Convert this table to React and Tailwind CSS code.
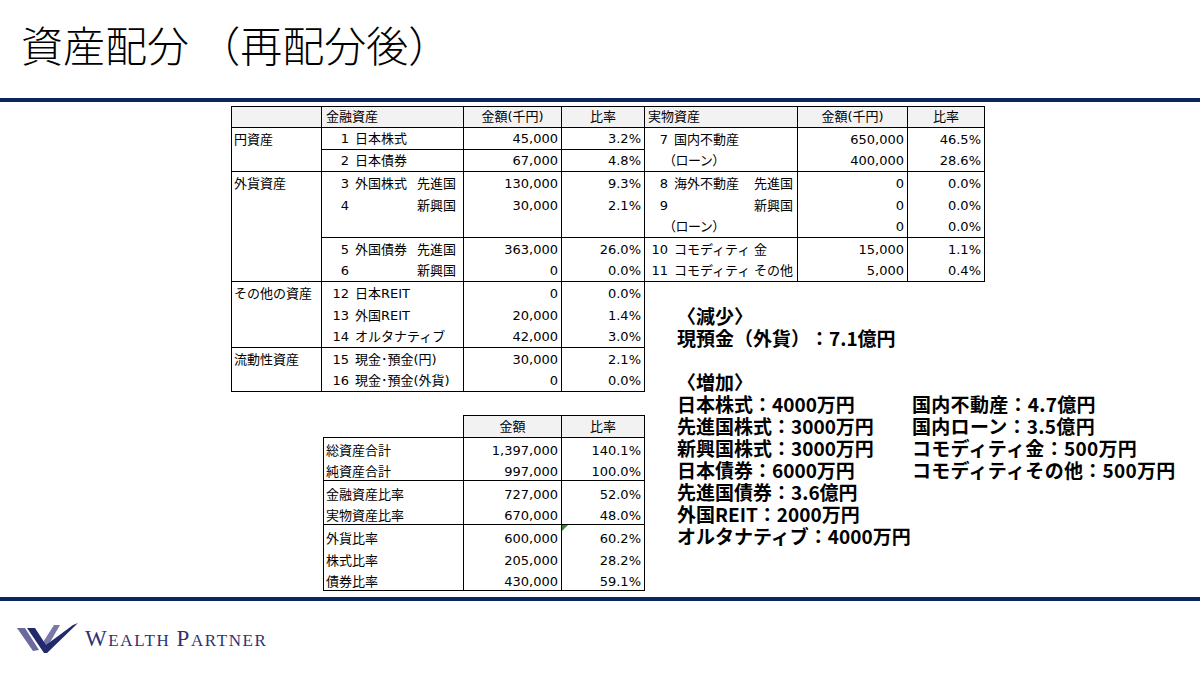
import React from "react";

const T = "font-['DejaVu_Sans','Noto_Sans_CJK_JP',sans-serif]";

const leftRows = [
  { cat: "円資産", num: "1", name: "日本株式", amt: "45,000", pct: "3.2%", b: true },
  { num: "2", name: "日本債券", amt: "67,000", pct: "4.8%", b: true, catB: true },
  { cat: "外貨資産", num: "3", name: "外国株式", sub: "先進国", amt: "130,000", pct: "9.3%" },
  { num: "4", sub: "新興国", amt: "30,000", pct: "2.1%" },
  { b: true },
  { num: "5", name: "外国債券", sub: "先進国", amt: "363,000", pct: "26.0%" },
  { num: "6", sub: "新興国", amt: "0", pct: "0.0%", b: true, catB: true },
  { cat: "その他の資産", num: "12", name: "日本REIT", amt: "0", pct: "0.0%" },
  { num: "13", name: "外国REIT", amt: "20,000", pct: "1.4%" },
  { num: "14", name: "オルタナティブ", amt: "42,000", pct: "3.0%", b: true, catB: true },
  { cat: "流動性資産", num: "15", name: "現金･預金(円)", amt: "30,000", pct: "2.1%" },
  { num: "16", name: "現金･預金(外貨)", amt: "0", pct: "0.0%", b: true, catB: true },
];

const rightRows = [
  { num: "7", name: "国内不動産", amt: "650,000", pct: "46.5%" },
  { name: "（ローン）", paren: true, amt: "400,000", pct: "28.6%", b: true },
  { num: "8", name: "海外不動産", sub: "先進国", amt: "0", pct: "0.0%" },
  { num: "9", sub: "新興国", amt: "0", pct: "0.0%" },
  { name: "（ローン）", paren: true, amt: "0", pct: "0.0%", b: true },
  { num: "10", name: "コモディティ", sub: "金", amt: "15,000", pct: "1.1%" },
  { num: "11", name: "コモディティ", sub: "その他", amt: "5,000", pct: "0.4%", b: true },
];

const summary = [
  { label: "総資産合計", amt: "1,397,000", pct: "140.1%", t: true },
  { label: "純資産合計", amt: "997,000", pct: "100.0%", b: true },
  { label: "金融資産比率", amt: "727,000", pct: "52.0%" },
  { label: "実物資産比率", amt: "670,000", pct: "48.0%", b: true },
  { label: "外貨比率", amt: "600,000", pct: "60.2%", tri: true },
  { label: "株式比率", amt: "205,000", pct: "28.2%" },
  { label: "債券比率", amt: "430,000", pct: "59.1%", b: true },
];

function LeftTable() {
  return (
    <div className={`flex flex-col border-l border-black text-[13px] text-black ${T}`}>
      <div className="flex h-[22px]">
        <div className="w-[90px] shrink-0 border-r border-t border-b border-black bg-[#f2f2f2]" />
        <div className="w-[142px] shrink-0 border-r border-t border-b border-black bg-[#f2f2f2] flex items-center pl-[4px]">金融資産</div>
        <div className="w-[98px] shrink-0 border-r border-t border-b border-black bg-[#f2f2f2] flex items-center justify-center">金額(千円)</div>
        <div className="w-[83px] shrink-0 border-r border-t border-b border-black bg-[#f2f2f2] flex items-center justify-center">比率</div>
      </div>
      {leftRows.map((r, i) => (
        <div key={i} className="flex h-[22px]">
          <div className={`w-[90px] shrink-0 border-r border-black flex items-center pt-[1px] pl-[2px] whitespace-nowrap ${r.catB ? "border-b" : ""}`}>{r.cat}</div>
          <div className={`w-[142px] shrink-0 border-r border-black flex items-center pt-[1px] whitespace-nowrap ${r.b ? "border-b" : ""}`}>
            <span className="w-[27px] shrink-0 text-right">{r.num}</span>
            {r.sub ? (
              <>
                <span className="w-[62px] shrink-0 ml-[6px]">{r.name}</span>
                <span>{r.sub}</span>
              </>
            ) : (
              <span className="ml-[6px]">{r.name}</span>
            )}
          </div>
          <div className={`w-[98px] shrink-0 border-r border-black flex items-center justify-end pt-[1px] pr-[3px] ${r.b ? "border-b" : ""}`}>{r.amt}</div>
          <div className={`w-[83px] shrink-0 border-r border-black flex items-center justify-end pt-[1px] pr-[3px] ${r.b ? "border-b" : ""}`}>{r.pct}</div>
        </div>
      ))}
    </div>
  );
}

function RightTable() {
  return (
    <div className={`flex flex-col text-[13px] text-black ${T}`}>
      <div className="flex h-[22px]">
        <div className="w-[153px] shrink-0 border-r border-t border-b border-black bg-[#f2f2f2] flex items-center pl-[3px]">実物資産</div>
        <div className="w-[110px] shrink-0 border-r border-t border-b border-black bg-[#f2f2f2] flex items-center justify-center">金額(千円)</div>
        <div className="w-[77px] shrink-0 border-r border-t border-b border-black bg-[#f2f2f2] flex items-center justify-center">比率</div>
      </div>
      {rightRows.map((r, i) => (
        <div key={i} className="flex h-[22px]">
          <div className={`w-[153px] shrink-0 border-r border-black flex items-center pt-[1px] whitespace-nowrap ${r.b ? "border-b" : ""}`}>
            <span className="w-[23px] shrink-0 text-right">{r.num}</span>
            {r.sub ? (
              <>
                <span className="w-[80px] shrink-0 ml-[6px]">{r.name}</span>
                <span>{r.sub}</span>
              </>
            ) : (
              <span className={r.paren ? "ml-[-5px] tracking-[-0.5px]" : "ml-[6px]"}>{r.name}</span>
            )}
          </div>
          <div className={`w-[110px] shrink-0 border-r border-black flex items-center justify-end pt-[1px] pr-[3px] ${r.b ? "border-b" : ""}`}>{r.amt}</div>
          <div className={`w-[77px] shrink-0 border-r border-black flex items-center justify-end pt-[1px] pr-[3px] ${r.b ? "border-b" : ""}`}>{r.pct}</div>
        </div>
      ))}
    </div>
  );
}

function SummaryTable() {
  return (
    <div className={`flex flex-col ml-[92px] mt-[23px] text-[13px] text-black ${T}`}>
      <div className="flex h-[22px]">
        <div className="w-[140px] shrink-0" />
        <div className="w-[99px] shrink-0 border-l border-r border-t border-black bg-[#f2f2f2] flex items-center justify-center">金額</div>
        <div className="w-[83px] shrink-0 border-r border-t border-black bg-[#f2f2f2] flex items-center justify-center">比率</div>
      </div>
      {summary.map((r, i) => (
        <div key={i} className="flex h-[22px]">
          <div className={`w-[141px] shrink-0 border-l border-r border-black flex items-center pt-[5px] pl-[2px] ${r.t ? "border-t" : ""} ${r.b ? "border-b" : ""}`}>{r.label}</div>
          <div className={`w-[98px] shrink-0 border-r border-black flex items-center justify-end pt-[5px] pr-[3px] ${r.t ? "border-t" : ""} ${r.b ? "border-b" : ""}`}>{r.amt}</div>
          <div className={`relative w-[83px] shrink-0 border-r border-black flex items-center justify-end pt-[5px] pr-[3px] ${r.t ? "border-t" : ""} ${r.b ? "border-b" : ""}`}>
            {r.tri && (
              <span className="absolute left-0 top-0 w-0 h-0 border-t-[6px] border-t-[#2f8f2f] border-r-[6px] border-r-transparent" />
            )}
            {r.pct}
          </div>
        </div>
      ))}
    </div>
  );
}

function ChangeList() {
  const left = [
    "日本株式：4000万円",
    "先進国株式：3000万円",
    "新興国株式：3000万円",
    "日本債券：6000万円",
    "先進国債券：3.6億円",
    "外国REIT：2000万円",
    "オルタナティブ：4000万円",
  ];
  const right = [
    "国内不動産：4.7億円",
    "国内ローン：3.5億円",
    "コモディティ金：500万円",
    "コモディティその他：500万円",
  ];
  return (
    <div className="mt-[23px] ml-[32px] whitespace-nowrap text-[19px] leading-[22px] font-bold text-black [text-spacing-trim:space-all] font-['Noto_Sans_CJK_JP',sans-serif]">
      <div>〈減少〉</div>
      <div>現預金（外貨）：7.1億円</div>
      <div className="h-[22px]" />
      <div>〈増加〉</div>
      <div className="grid grid-cols-[235px_auto]">
        <div className="flex flex-col">
          {left.map((t) => (
            <div key={t}>{t}</div>
          ))}
        </div>
        <div className="flex flex-col tracking-[0.3px]">
          {right.map((t) => (
            <div key={t}>{t}</div>
          ))}
        </div>
      </div>
    </div>
  );
}

function Logo() {
  return (
    <div className="flex items-center gap-[5px]">
      <svg width="64" height="32" viewBox="0 0 64 32">
        <polygon points="1,6 9,6 23,28 17,29" fill="#6b6a9c" />
        <polygon points="24,25 38,3 44,3 29,29" fill="#7a78a8" />
        <polygon points="11,6 19,6 30,23 57,3 62,1 31,31 28,31" fill="#232a6b" />
      </svg>
      <div className="flex items-baseline tracking-[1.6px] text-[#2d3272] font-['Liberation_Serif',serif] leading-none">
        <span className="text-[23px]">W</span>
        <span className="text-[17px]">EALTH</span>
        <span className="text-[23px] ml-[6px]">P</span>
        <span className="text-[17px]">ARTNER</span>
      </div>
    </div>
  );
}

export default function App() {
  return (
    <div className="w-[1200px] h-[675px] bg-white overflow-hidden flex flex-col">
      <div className="h-[98px] pl-[21px] pt-[23px]">
        <h1 className="text-[42px] leading-[42px] font-light text-black whitespace-pre font-['Noto_Sans_CJK_JP',sans-serif]">
          {"資産配分 （再配分後）"}
        </h1>
      </div>
      <div className="h-[4px] bg-[#0b2561]" />
      <div className="h-[495px] flex pl-[231px] pt-[4px]">
        <div className="flex flex-col shrink-0">
          <LeftTable />
          <SummaryTable />
        </div>
        <div className="flex flex-col shrink-0">
          <RightTable />
          <ChangeList />
        </div>
      </div>
      <div className="h-[4px] bg-[#0b2561]" />
      <div className="flex-1 flex items-center pl-[16px]">
        <Logo />
      </div>
    </div>
  );
}
